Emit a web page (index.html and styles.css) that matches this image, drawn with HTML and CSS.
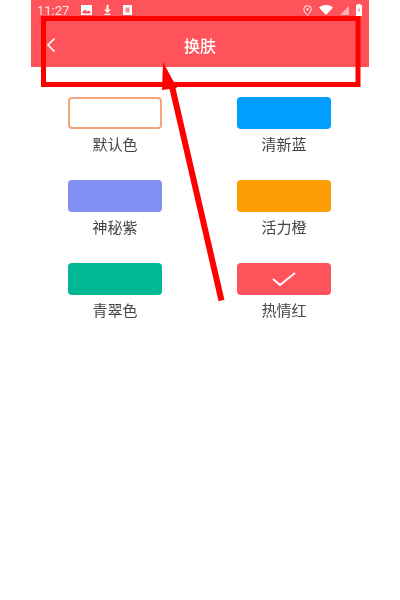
FILE: index.html
```html
<!DOCTYPE html>
<html lang="zh">
<head>
<meta charset="utf-8">
<title>换肤</title>
<link rel="stylesheet" href="styles.css">
</head>
<body>
<div class="phone">
  <header class="head">
    <div class="status">
      <span class="time">11:27</span>
      <div class="icons left">
        <svg width="11" height="10" viewBox="0 0 11 10"><path fill="#fff" d="M0 0h11v10H0z"/><path fill="#ff535c" d="M1.500 7 4 4.500l2 2 1.500-1 2 1.600V8.500h-8z"/></svg>
        <svg width="9" height="10" viewBox="0 0 9 10"><path fill="#fff" d="M3.500 0h2v4.500H8L4.500 8 1 4.500h2.500zM1.500 8.800h6V10h-6z"/></svg>
        <svg width="9" height="10" viewBox="0 0 9 10"><path fill="#fff" d="M0 0h9v10H0z"/><path fill="#ff8b91" d="M2.500 2.500h4v5h-4z"/></svg>
      </div>
      <div class="icons right">
        <svg width="9" height="11" viewBox="0 0 9 11"><path fill="none" stroke="#fff" stroke-width="1" d="M4.500.7a3.700 3.700 0 0 1 3.700 3.700c0 2.500-3.700 5.800-3.700 5.800S.8 6.900.8 4.400A3.700 3.700 0 0 1 4.500.7z"/><circle cx="4.500" cy="4.400" r="1.100" fill="#fff"/></svg>
        <svg width="14" height="10" viewBox="0 0 14 10"><path fill="#fff" d="M0 2.500C4-.8 10-.8 14 2.500L7 10z"/></svg>
        <svg width="9" height="9" viewBox="0 0 9 9"><path fill="#fff" fill-opacity=".55" d="M9 0v9H0z"/></svg>
        <svg width="6" height="12" viewBox="0 0 6 12"><path fill="#fff" d="M1.500 0h3v1H6v11H0V1h1.500z"/><path fill="#ff8b91" d="M3.300 3 1.500 6.500h1.300L2.500 9.500l2-4H3.200z"/></svg>
      </div>
    </div>
    <div class="bar">
      <svg class="back" width="10" height="16" viewBox="0 0 10 16"><path fill="none" stroke="#fff" stroke-width="1.600" d="M8.500 1.500 2 8l6.500 6.500"/></svg>
      <h1 class="title">换肤</h1>
    </div>
  </header>
  <main class="grid">
    <div class="item"><div class="swatch default"></div><p class="label">默认色</p></div>
    <div class="item"><div class="swatch blue"></div><p class="label">清新蓝</p></div>
    <div class="item"><div class="swatch purple"></div><p class="label">神秘紫</p></div>
    <div class="item"><div class="swatch orange"></div><p class="label">活力橙</p></div>
    <div class="item"><div class="swatch green"></div><p class="label">青翠色</p></div>
    <div class="item"><div class="swatch red"><svg width="26" height="16" viewBox="0 0 26 16"><path fill="none" stroke="#fff" stroke-width="2" d="M2 8l7 6L24 2"/></svg></div><p class="label">热情红</p></div>
  </main>
  <svg class="overlay" width="400" height="600" viewBox="0 0 400 600">
    <rect x="43.500" y="18.500" width="314.500" height="66" fill="none" stroke="#f00" stroke-width="5"/>
    <path d="M221.500 300.500 171 82" fill="none" stroke="#f00" stroke-width="6"/>
    <path d="M163 62l14 26-15 2z" fill="#f00"/>
  </svg>
</div>
</body>
</html>
```
FILE: styles.css
```css
* { box-sizing: border-box; }
html, body { margin: 0; padding: 0; background: #fff; }
.phone {
  position: relative;
  width: 400px;
  height: 600px;
  overflow: hidden;
  background: #fff;
  font-family: "Noto Sans CJK SC", "Liberation Sans", sans-serif;
  filter: blur(0.45px);
}
.head {
  margin: 0 31px;
  width: 338px;
  height: 67px;
  background: #ff535c;
  color: #fff;
}
.status {
  display: flex;
  align-items: center;
  justify-content: space-between;
  height: 20px;
  padding: 0 7px 0 6px;
}
.time { font: 13px "Roboto", sans-serif; margin-right: 12px; opacity: .85; }
.icons { display: flex; align-items: center; }
.left { gap: 11px; flex: 1; }
.right { gap: 7px; }
.bar {
  display: grid;
  grid-template-columns: 1fr auto 1fr;
  align-items: center;
  height: 47px;
  padding: 2px 0 0 15px;
}
.back { display: block; }
.title { margin: 0 15px 0 0; font-size: 16px; font-weight: 500; line-height: 24px; grid-column: 2; }
.grid {
  display: grid;
  grid-template-columns: 94px 94px;
  justify-content: space-between;
  row-gap: 25px;
  margin-top: 30px;
  padding: 0 69px 0 68px;
}
.item { display: flex; flex-direction: column; align-items: center; }
.swatch {
  width: 94px;
  height: 32px;
  border-radius: 4px;
  display: flex;
  align-items: center;
  justify-content: center;
}
.default { background: #fff; border: 2px solid #f2a57c; }
.blue { background: #009fff; }
.purple { background: #8290f3; }
.orange { background: #ff9d04; }
.green { background: #00b894; }
.red { background: #ff535c; }
.label { margin: 4px 0 0; font-size: 15px; line-height: 22px; color: #444; }
.overlay { position: absolute; left: 0; top: 0; pointer-events: none; }
```
